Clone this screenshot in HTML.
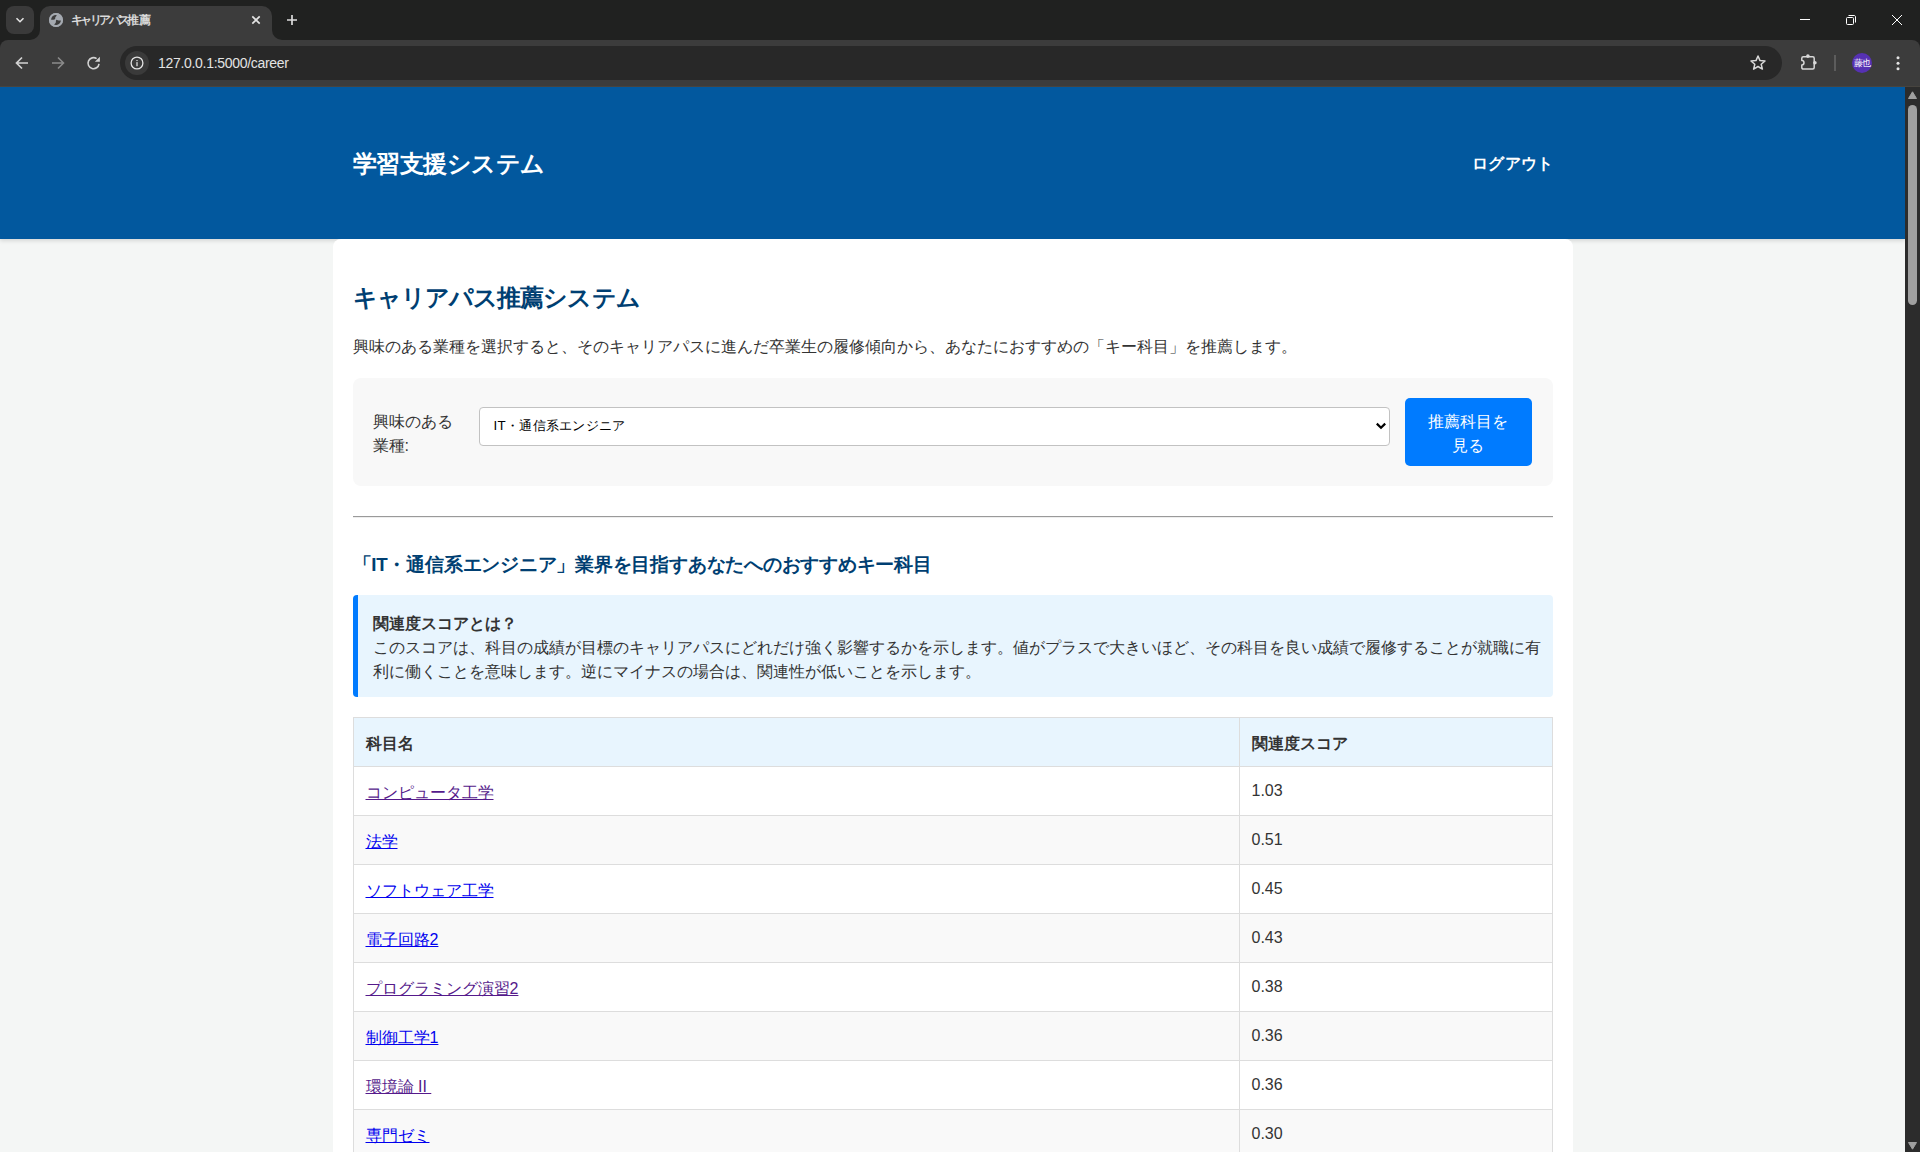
<!DOCTYPE html>
<html lang="ja">
<head>
<meta charset="utf-8">
<title>キャリアパス推薦</title>
<style>
*{box-sizing:border-box;}
html,body{margin:0;padding:0;}
body{width:1920px;height:1152px;overflow:hidden;position:relative;background:#202020;font-family:"Liberation Sans",sans-serif;}
.abs{position:absolute;}
/* ---------- browser chrome ---------- */
#strip{left:0;top:0;width:1920px;height:40px;background:#202120;}
#tabsbtn{left:6px;top:6px;width:28px;height:28px;border-radius:8px;background:#3a3a3a;}
#tab{left:40px;top:6px;width:232px;height:34px;background:#3c3c3c;border-radius:10px 10px 0 0;}
.foot{top:30px;width:10px;height:10px;background:#3c3c3c;}
.foot i{position:absolute;left:0;top:0;width:10px;height:10px;background:#202120;}
#tabtitle{left:71px;top:12px;font-size:12px;line-height:16px;color:#e6e6e6;white-space:nowrap;-webkit-text-stroke:0.3px #e6e6e6;}
#toolbar{left:0;top:40px;width:1920px;height:46px;background:#3c3c3c;border-radius:8px 8px 0 0;}
#tbline{left:0;top:86px;width:1920px;height:1px;background:#47443f;}
#omni{left:120px;top:46px;width:1662px;height:34px;border-radius:17px;background:#282828;}
#infocirc{left:125px;top:51px;width:24px;height:24px;border-radius:12px;background:#3a3a3a;}
#url{left:158px;top:54px;font-size:14px;line-height:18px;color:#e3e3e3;white-space:nowrap;letter-spacing:-0.3px;}
#avatar{left:1852px;top:53px;width:20px;height:20px;border-radius:10px;background:#5631b3;color:#fff;font-size:9px;line-height:20px;text-align:center;letter-spacing:-1px;}
#sep{left:1834px;top:55px;width:2px;height:16px;background:#5c5c5c;}
/* ---------- viewport ---------- */
#vp{left:0;top:87px;width:1905px;height:1065px;background:#f4f6f5;overflow:hidden;}
#sb{left:1905px;top:87px;width:15px;height:1065px;background:#2c2c2c;}
#thumb{left:1908px;top:105px;width:9px;height:200px;border-radius:5px;background:#a0a0a0;}

#hdr{position:absolute;left:0;top:0;width:1905px;height:152px;background:#02589e;box-shadow:0 2px 4px rgba(0,0,0,0.12);z-index:1;}
#hdr .wrap{position:absolute;left:352.5px;top:0;width:1200px;height:152px;}
#brand{position:absolute;left:0;top:58.5px;letter-spacing:-0.45px;font-size:24px;line-height:36px;font-weight:bold;color:#fff;white-space:nowrap;}
#logout{position:absolute;right:-1px;top:65px;letter-spacing:0.3px;font-size:16px;line-height:24px;font-weight:bold;color:#fff;white-space:nowrap;}
#card{position:absolute;left:332.5px;top:152px;width:1240px;height:1200px;background:#fff;border-radius:8px;padding:20px;z-index:2;}
#card h2{position:absolute;left:20px;top:41px;letter-spacing:-0.9px;margin:0;font-size:24px;line-height:36px;font-weight:bold;color:#003f72;white-space:nowrap;}
#desc{position:absolute;left:20px;top:96px;margin:0;font-size:16px;line-height:24px;color:#333;white-space:nowrap;}
#form{position:absolute;left:20px;top:139px;width:1200px;height:108px;background:#f8f8f8;border-radius:8px;}
#lbl{position:absolute;left:20px;top:32px;font-size:16px;line-height:24px;color:#333;}
#sel{position:absolute;left:126px;top:29px;width:911px;height:39px;background:#fff;border:1px solid #c2c2c2;border-radius:4px;}
#sel span{position:absolute;left:14px;top:9px;letter-spacing:0.3px;font-size:13.33px;line-height:18px;color:#000;white-space:nowrap;}
#btn{position:absolute;left:1052px;top:20px;width:127px;height:68px;background:#007bff;border-radius:5px;color:#fff;font-size:16px;line-height:24px;text-align:center;padding-top:12px;}
#hr{position:absolute;left:20px;top:277px;width:1200px;height:2px;border-top:1px solid #9a9a9a;border-bottom:1px solid #eeeeee;}
#card h3{position:absolute;left:20px;top:312px;letter-spacing:-0.23px;margin:0;font-size:18.72px;line-height:28px;font-weight:bold;color:#003f72;white-space:nowrap;}
#info{position:absolute;left:20px;top:356px;width:1200px;height:102px;background:#e8f5fe;border-left:5px solid #007bff;border-radius:4px;padding:17px 5px 13px 15px;font-size:16px;line-height:24px;color:#333;}
#info b{font-weight:bold;}
#tbl{position:absolute;left:20px;top:478px;width:1200px;border-collapse:collapse;font-size:16px;line-height:24px;color:#333;}
#tbl th,#tbl td{border:1px solid #dddddd;padding:12px;text-align:left;height:49px;}
#tbl th{background:#e8f5fe;font-weight:bold;}
#tbl th:first-child,#tbl td:first-child{width:886px;}
#tbl tr.s td{background:#f9f9f9;}
#tbl a{color:#0000ee;text-decoration:underline;position:relative;top:2px;}
#tbl th span{position:relative;top:2px;}
#tbl a.v{color:#551a8b;}
</style>
</head>
<body>
<!-- tab strip -->
<div id="strip" class="abs"></div>
<div id="tab" class="abs"></div>
<div class="abs foot" style="left:30px;"><i style="border-radius:0 0 10px 0"></i></div>
<div class="abs foot" style="left:272px;"><i style="border-radius:0 0 0 10px"></i></div>
<div id="tabsbtn" class="abs"></div>
<svg class="abs" style="left:14px;top:14px" width="12" height="12" viewBox="0 0 12 12"><path d="M2.5 4.2 L6 7.7 L9.5 4.2" fill="none" stroke="#e3e3e3" stroke-width="1.6"/></svg>
<svg class="abs" style="left:49px;top:13px" width="14" height="14" viewBox="0 0 14 14"><circle cx="7" cy="7" r="7" fill="#a4a9b0"/><path d="M2.1 6.7 C2.2 4.4 3.9 2.5 6.2 2.1 L7.8 2.2 C7.5 3.3 6.3 3.7 6.2 4.8 C6.6 6 5.7 6.8 4.4 6.8 Z" fill="#3c3c3c"/><path d="M7.4 6.8 C8.5 6.9 9.3 7.7 10.5 7.6 L11.9 7.4 C11.7 9.8 9.9 11.6 7.5 11.9 L5.2 11.7 C5.7 10.8 6.6 10.5 6.8 9.6 C7 8.6 6.8 7.3 7.4 6.8 Z" fill="#3c3c3c"/><circle cx="7" cy="7" r="6.3" fill="none" stroke="#a4a9b0" stroke-width="1.4"/></svg>
<div id="tabtitle" class="abs"><span style="letter-spacing:-2.6px">キャリアパス</span><span style="letter-spacing:-0.6px">推薦</span></div>
<svg class="abs" style="left:250px;top:14px" width="12" height="12" viewBox="0 0 12 12"><path d="M2.3 2.3 L9.7 9.7 M9.7 2.3 L2.3 9.7" stroke="#e3e3e3" stroke-width="1.7"/></svg>
<svg class="abs" style="left:285px;top:13px" width="14" height="14" viewBox="0 0 14 14"><path d="M7 2 V12 M2 7 H12" stroke="#dcdcdc" stroke-width="1.7"/></svg>
<!-- window controls -->
<svg class="abs" style="left:1795px;top:10px" width="20" height="20" viewBox="0 0 20 20"><path d="M5 9.5 H15" stroke="#fff" stroke-width="1"/></svg>
<svg class="abs" style="left:1841px;top:10px" width="20" height="20" viewBox="0 0 20 20"><rect x="5.5" y="7.5" width="7" height="7" rx="1" fill="none" stroke="#fff" stroke-width="1"/><path d="M7.5 5.5 H13 C14 5.5 14.5 6 14.5 7 V12.5" fill="none" stroke="#fff" stroke-width="1"/></svg>
<svg class="abs" style="left:1887px;top:10px" width="20" height="20" viewBox="0 0 20 20"><path d="M5 5 L15 15 M15 5 L5 15" stroke="#fff" stroke-width="1"/></svg>
<!-- toolbar -->
<div id="toolbar" class="abs"></div>
<div id="tbline" class="abs"></div>
<svg class="abs" style="left:12px;top:53px" width="20" height="20" viewBox="0 0 20 20"><path d="M16 10 H4.5 M10 4.5 L4.5 10 L10 15.5" fill="none" stroke="#d2d2d2" stroke-width="1.7"/></svg>
<svg class="abs" style="left:48px;top:53px" width="20" height="20" viewBox="0 0 20 20"><path d="M4 10 H15.5 M10 4.5 L15.5 10 L10 15.5" fill="none" stroke="#8a8a8a" stroke-width="1.6"/></svg>
<svg class="abs" style="left:84px;top:53px" width="20" height="20" viewBox="0 0 20 20"><path d="M15 10.8 A5.5 5.5 0 1 1 12.6 5.6" fill="none" stroke="#d2d2d2" stroke-width="1.6"/><path d="M15.9 3.8 L15.9 8.7 L10.9 8.7 Z" fill="#d2d2d2"/></svg>
<div id="omni" class="abs"></div>
<div id="infocirc" class="abs"></div>
<svg class="abs" style="left:129px;top:55px" width="16" height="16" viewBox="0 0 16 16"><circle cx="8" cy="8" r="5.9" fill="none" stroke="#e3e3e3" stroke-width="1.3"/><rect x="7.3" y="7.1" width="1.4" height="4.1" fill="#cfcfcf"/><rect x="7.3" y="5" width="1.4" height="1.1" fill="#cfcfcf"/></svg>
<div id="url" class="abs">127.0.0.1:5000/career</div>
<svg class="abs" style="left:1748px;top:53px" width="20" height="20" viewBox="0 0 20 20"><path d="M10 3 L12 7.6 L17 8 L13.2 11.3 L14.4 16.1 L10 13.5 L5.6 16.1 L6.8 11.3 L3 8 L8 7.6 Z" fill="none" stroke="#d8d8d8" stroke-width="1.5" stroke-linejoin="round"/></svg>
<svg class="abs" style="left:1798px;top:52px" width="20" height="20" viewBox="0 0 20 20"><path d="M3.8 6.2 Q3.8 4.7 5.3 4.7 H14.7 Q16.2 4.7 16.2 6.2 V15.6 Q16.2 17.1 14.7 17.1 H5.3 Q3.8 17.1 3.8 15.6 V13 A2.2 2.2 0 0 0 3.8 8.6 Z" fill="none" stroke="#d8d8d8" stroke-width="1.5" stroke-linejoin="round"/><circle cx="9.9" cy="4.1" r="1.8" fill="#d8d8d8"/><circle cx="16.9" cy="10.8" r="1.8" fill="#d8d8d8"/></svg>
<div id="sep" class="abs"></div>
<div id="avatar" class="abs">藤也</div>
<svg class="abs" style="left:1888px;top:52.6px" width="20" height="20" viewBox="0 0 20 20"><circle cx="10" cy="4.8" r="1.5" fill="#e3e3e3"/><circle cx="10" cy="10.3" r="1.5" fill="#e3e3e3"/><circle cx="10" cy="15.8" r="1.5" fill="#e3e3e3"/></svg>
<!-- page -->
<div id="vp" class="abs">

<div id="hdr">
  <div class="wrap">
    <div id="brand">学習支援システム</div>
    <div id="logout">ログアウト</div>
  </div>
</div>
<div id="card">
  <h2 id="h2">キャリアパス推薦システム</h2>
  <p id="desc">興味のある業種を選択すると、そのキャリアパスに進んだ卒業生の履修傾向から、あなたにおすすめの「キー科目」を推薦します。</p>
  <div id="form">
    <div id="lbl">興味のある<br>業種:</div>
    <div id="sel"><span>IT・通信系エンジニア</span>
      <svg style="position:absolute;left:895px;top:13px" width="12" height="10" viewBox="0 0 12 10"><path d="M1.8 2.6 L6 6.8 L10.2 2.6" fill="none" stroke="#000" stroke-width="2.2"/></svg>
    </div>
    <div id="btn">推薦科目を<br>見る</div>
  </div>
  <div id="hr"></div>
  <h3 id="h3">「IT・通信系エンジニア」業界を目指すあなたへのおすすめキー科目</h3>
  <div id="info"><b>関連度スコアとは？</b><br>このスコアは、科目の成績が目標のキャリアパスにどれだけ強く影響するかを示します。値がプラスで大きいほど、その科目を良い成績で履修することが就職に有利に働くことを意味します。逆にマイナスの場合は、関連性が低いことを示します。</div>
  <table id="tbl">
    <tr class="th"><th><span>科目名</span></th><th><span>関連度スコア</span></th></tr>
    <tr><td><a class="v">コンピュータ工学</a></td><td>1.03</td></tr>
    <tr class="s"><td><a>法学</a></td><td>0.51</td></tr>
    <tr><td><a>ソフトウェア工学</a></td><td>0.45</td></tr>
    <tr class="s"><td><a>電子回路2</a></td><td>0.43</td></tr>
    <tr><td><a class="v">プログラミング演習2</a></td><td>0.38</td></tr>
    <tr class="s"><td><a>制御工学1</a></td><td>0.36</td></tr>
    <tr><td><a class="v">環境論 II&nbsp;</a></td><td>0.36</td></tr>
    <tr class="s"><td><a>専門ゼミ</a></td><td>0.30</td></tr>
    <tr><td><a>データベース</a></td><td>0.29</td></tr>
  </table>
</div>
</div>
<div id="sb" class="abs"></div>
<svg class="abs" style="left:1906px;top:90px" width="13" height="10" viewBox="0 0 13 10"><path d="M6.5 1.8 L10.5 8.5 H2.5 Z" fill="#a0a0a0" stroke="#a0a0a0" stroke-width="1" stroke-linejoin="round"/></svg>
<div id="thumb" class="abs"></div>
<svg class="abs" style="left:1906px;top:1141px" width="13" height="10" viewBox="0 0 13 10"><path d="M2.5 1.5 H10.5 L6.5 8.2 Z" fill="#a0a0a0" stroke="#a0a0a0" stroke-width="1" stroke-linejoin="round"/></svg>
</body>
</html>
